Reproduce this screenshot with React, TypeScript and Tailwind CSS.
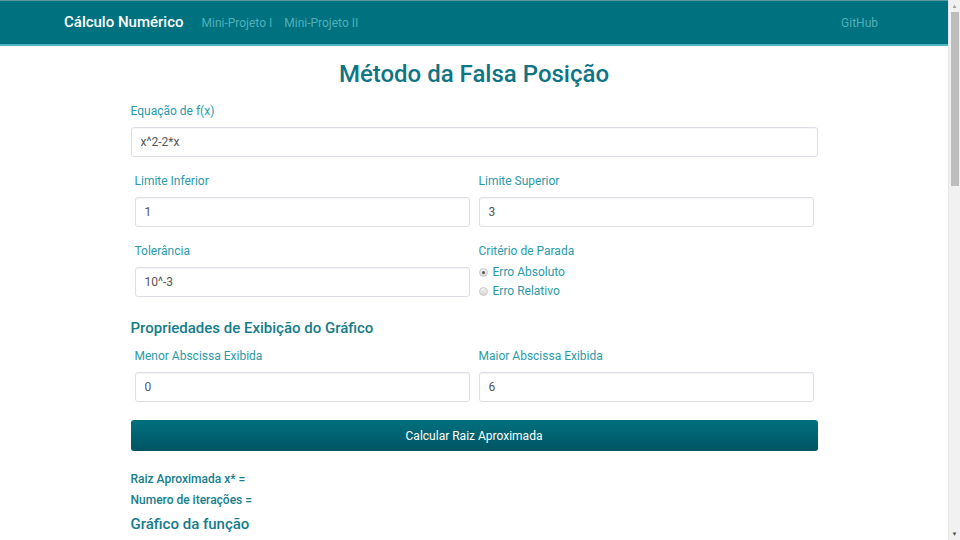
import React from "react";

const label = "block text-[12px] leading-[14px] text-[#2b9aa8] mb-[9px]";
const input =
  "block w-full h-[30px] border border-[#dcdfe6] rounded-[3px] px-[9px] text-[12px] text-[#555] bg-white outline-none shadow-[inset_0_1px_1px_rgba(0,0,0,0.04)]";

function Field({ name, value }: { name: string; value: string }) {
  return (
    <div className="flex-1">
      <label className={label}>{name}</label>
      <input className={input} defaultValue={value} />
    </div>
  );
}

function Radio({ text, checked }: { text: string; checked?: boolean }) {
  return (
    <div className="flex items-center gap-[5px] text-[12px] leading-[19px] text-[#2b9aa8]">
      <span className="w-[9px] h-[9px] rounded-full border border-[#c9c9c9] bg-gradient-to-b from-[#f2f2f2] to-[#d8d8d8] flex items-center justify-center">
        {checked && <span className="w-[3px] h-[3px] rounded-full bg-[#555]" />}
      </span>
      {text}
    </div>
  );
}

function Scrollbar() {
  return (
    <div className="w-[12px] h-screen bg-[#f1f1f1] border-l border-l-[#e6e6e6] flex flex-col items-center">
      <span className="h-[12px] text-[6px] leading-[12px] text-[#a3a3a3]">▲</span>
      <div className="w-[8px] h-[174px] bg-[#bdbdbd]" />
      <div className="flex-1" />
      <span className="h-[12px] text-[6px] leading-[12px] text-[#505050]">▼</span>
    </div>
  );
}

export default function App() {
  return (
    <div className="h-screen flex overflow-hidden bg-white font-['Roboto',sans-serif]">
      <div className="flex-1 min-w-0">
        <nav className="h-[46px] bg-[#00717f] border-t border-t-[#5b99a2] border-b-2 border-b-[#4fb6c2] flex items-center px-[64px]">
          <span className="text-white text-[15px] font-medium mr-[18px]">Cálculo Numérico</span>
          <a className="text-[12px] text-[#4fb0bb] mr-[12px]">Mini-Projeto I</a>
          <a className="text-[12px] text-[#4fb0bb]">Mini-Projeto II</a>
          <a className="ml-auto mr-[6px] text-[12px] text-[#4fb0bb]">GitHub</a>
        </nav>

        <main className="max-w-[687px] mx-auto">
          <h1 className="text-center text-[24px] leading-[28px] font-medium text-[#0f7584] mt-[14px] mb-[16px]">
            Método da Falsa Posição
          </h1>

          <label className={label}>Equação de f(x)</label>
          <input className={input} defaultValue="x^2-2*x" />

          <div className="flex gap-[9px] px-[4px] mt-[17px]">
            <Field name="Limite Inferior" value="1" />
            <Field name="Limite Superior" value="3" />
          </div>

          <div className="flex gap-[9px] px-[4px] mt-[17px]">
            <Field name="Tolerância" value="10^-3" />
            <div className="flex-1">
              <label className="block text-[12px] leading-[14px] text-[#2b9aa8] mb-[5px]">Critério de Parada</label>
              <Radio text="Erro Absoluto" checked />
              <Radio text="Erro Relativo" />
            </div>
          </div>

          <h2 className="text-[15px] leading-[18px] font-medium text-[#157c8a] mt-[18px]">
            Propriedades de Exibição do Gráfico
          </h2>

          <div className="flex gap-[9px] px-[4px] mt-[12px]">
            <Field name="Menor Abscissa Exibida" value="0" />
            <Field name="Maior Abscissa Exibida" value="6" />
          </div>

          <button className="block w-full h-[31px] mt-[18px] rounded-[3px] bg-gradient-to-b from-[#00707e] to-[#005563] text-white text-[12px]">
            Calcular Raiz Aproximada
          </button>

          <div className="mt-[18px] text-[12px] font-medium text-[#167e8c] leading-[21px]">
            <p>Raiz Aproximada x* =</p>
            <p>Numero de iterações =</p>
          </div>
          <h2 className="text-[15px] leading-[22px] font-medium text-[#157c8a] mt-[2px]">Gráfico da função</h2>
        </main>
      </div>
      <Scrollbar />
    </div>
  );
}
